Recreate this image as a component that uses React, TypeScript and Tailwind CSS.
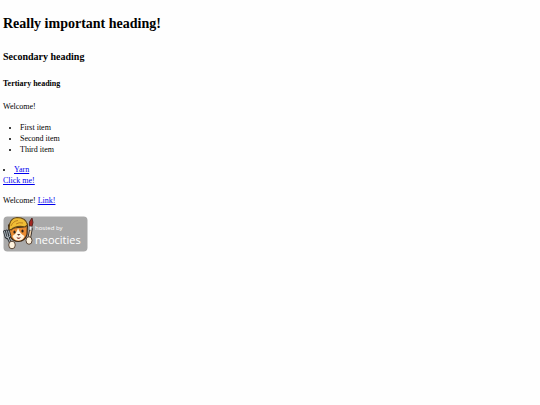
import React from 'react';

const items = ['First item', 'Second item', 'Third item'];

const NeocitiesBadge: React.FC = () => {
  return (
    <svg viewBox="0 0 85 36" className="block w-[85px] h-9" role="img" aria-label="Hosted by Neocities">
      <rect x="0.5" y="0.5" width="84" height="35" rx="4" fill="#a9a9a9" />
      {/* brush */}
      <path d="M28 13L25.500 26" stroke="#2e2724" strokeWidth="3.400" strokeLinecap="round" />
      <path d="M28 13L25.500 26" stroke="#f0d3ae" strokeWidth="1.600" />
      <path d="M29 2q-4 4-2.500 8l2.500.5q2-4 0-8.500z" fill="#a32620" stroke="#46201c" strokeWidth="0.8" />
      <path d="M26.300 10l2.800.4-.5 4-2.500-.3z" fill="#eee" stroke="#444" strokeWidth="0.5" />
      {/* cat */}
      <path
        d="M5.500 9L6.500 19Q9 25.500 15.500 25.500Q22 25 24 18.500L24.500 8L20 11L10 12Z"
        fill="#e98b32"
        stroke="#3c2817"
        strokeWidth="1.200"
        strokeLinejoin="round"
      />
      <path d="M15 12q-1 5-5.500 8 1.500 4.500 6 4.500t6-4.500q-4.500-2-6.500-8z" fill="#fff3df" />
      <path
        d="M6 13Q6 2 14 1.500Q23 1.500 24.500 9L22 11Q13 9 8 14Z"
        fill="#f0bd35"
        stroke="#624717"
        strokeWidth="1.200"
        strokeLinejoin="round"
      />
      <path d="M8 10Q10 5 15 4.500M13 8Q16 6 20 7" fill="none" stroke="#b77a1c" strokeWidth="0.9" />
      <ellipse cx="11.500" cy="16" rx="1.100" ry="1.500" fill="#27201c" />
      <ellipse cx="19.500" cy="15" rx="1.100" ry="1.500" fill="#27201c" />
      <path d="M14 18h3.400l-1.700 1.800z" fill="#56312a" />
      <path d="M13.500 21q2.500 1.500 4.500-.3-1 2.300-2.500 2.300t-2-2z" fill="#8b3328" />
      {/* fork */}
      <path
        d="M1.500 15.500L3 21Q5 23 7 20L5.500 15M3.500 15L5 21.500L9 30"
        fill="none"
        stroke="#30353a"
        strokeWidth="2.800"
        strokeLinecap="round"
      />
      <path
        d="M1.500 15.500L3 21Q5 23 7 20L5.500 15M3.500 15L5 21.500L9 30"
        fill="none"
        stroke="#b9c3ca"
        strokeWidth="0.9"
        strokeLinecap="round"
      />
      {/* paws */}
      <ellipse cx="9" cy="29" rx="3.300" ry="3.800" fill="#fff3df" stroke="#4b3424" strokeWidth="0.9" />
      <ellipse cx="26" cy="24.500" rx="3" ry="3.800" fill="#fff3df" stroke="#4b3424" strokeWidth="0.9" />
      <g fill="#fff" fontFamily="'Open Sans', sans-serif">
        <text x="32" y="14" fontSize="6">
          hosted by
        </text>
        <text x="32" y="28" fontSize="11">
          neocities
        </text>
      </g>
    </svg>
  );
};

const App: React.FC = () => {
  return (
    <main className="min-h-screen bg-[#fefefe] px-[3px] pt-[13px] text-black text-[8px] leading-[11px] font-['Liberation_Serif',serif]">
      <h1 className="text-[14px] leading-[22px] font-bold">Really important heading!</h1>
      <h2 className="mt-[14px] text-[10px] leading-4 font-bold">Secondary heading</h2>
      <h3 className="mt-3 text-[8px] leading-[13px] font-bold">Tertiary heading</h3>
      <p className="mt-[11px]">Welcome!</p>
      <ul className="mt-[10px] pl-[17px] list-disc">
        {items.map((item) => (
          <li key={item}>{item}</li>
        ))}
      </ul>
      <ul className="mt-[9px] list-disc list-inside">
        <li>
          <a href="#yarn" className="text-[#0000ee] underline">
            Yarn
          </a>
        </li>
      </ul>
      <a href="#click" className="block w-fit text-[#0000ee] underline">
        Click me!
      </a>
      <p className="mt-[9px]">
        Welcome!{' '}
        <a href="#link" className="text-[#0000ee] underline">
          Link!
        </a>
      </p>
      <a href="#neocities" className="block w-fit mt-[10px]">
        <NeocitiesBadge />
      </a>
    </main>
  );
};

export default App;
